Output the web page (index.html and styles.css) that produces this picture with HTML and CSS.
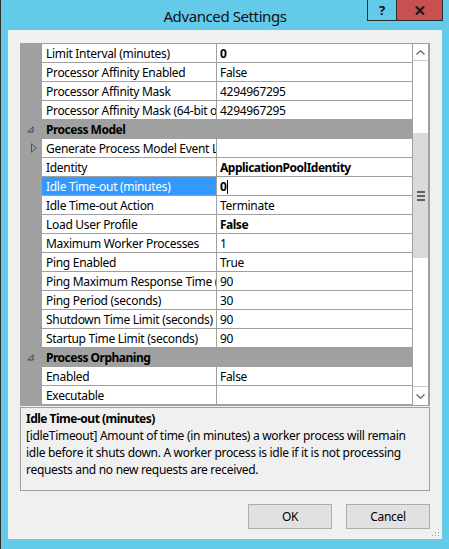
FILE: index.html
```html
<!DOCTYPE html>
<html>
<head>
<meta charset="utf-8">
<link rel="stylesheet" href="styles.css">
</head>
<body>
<div class="window">
  <div class="titlebar">
    <div class="title">Advanced Settings</div>
    <div class="caption-btns">
      <div class="cbtn help">?</div>
      <div class="cbtn close">
        <svg width="10" height="9" viewBox="0 0 10 9"><path d="M1 0.5 L9 8.5 M9 0.5 L1 8.5" stroke="#1a1a1a" stroke-width="2.2" fill="none"/></svg>
      </div>
    </div>
  </div>
  <div class="client">
    <div class="pg">
      <div class="rows">
        <div class="row"><div class="gut"></div><div class="name">Limit Interval (minutes)</div><div class="val bold">0</div></div>
        <div class="row"><div class="gut"></div><div class="name">Processor Affinity Enabled</div><div class="val">False</div></div>
        <div class="row"><div class="gut"></div><div class="name">Processor Affinity Mask</div><div class="val">4294967295</div></div>
        <div class="row"><div class="gut"></div><div class="name">Processor Affinity Mask (64-bit option)</div><div class="val">4294967295</div></div>
        <div class="row cat"><div class="gut"><svg class="collapse" width="7" height="7" viewBox="0 0 7 7"><path d="M6 0.8 L6 6 L0.8 6 Z" fill="none" stroke="#404040" stroke-width="1"/></svg></div><div class="catname">Process Model</div></div>
        <div class="row"><div class="gut"><svg class="expand" width="6" height="10" viewBox="0 0 6 10"><path d="M0.5 0.8 L5.2 5 L0.5 9.2 Z" fill="none" stroke="#505050" stroke-width="1"/></svg></div><div class="name">Generate Process Model Event Log Entry</div><div class="val"></div></div>
        <div class="row"><div class="gut"></div><div class="name">Identity</div><div class="val bold">ApplicationPoolIdentity</div></div>
        <div class="row"><div class="gut"></div><div class="name sel">Idle Time-out (minutes)</div><div class="val bold">0<span class="caret"></span></div></div>
        <div class="row"><div class="gut"></div><div class="name">Idle Time-out Action</div><div class="val">Terminate</div></div>
        <div class="row"><div class="gut"></div><div class="name">Load User Profile</div><div class="val bold">False</div></div>
        <div class="row"><div class="gut"></div><div class="name">Maximum Worker Processes</div><div class="val">1</div></div>
        <div class="row"><div class="gut"></div><div class="name">Ping Enabled</div><div class="val">True</div></div>
        <div class="row"><div class="gut"></div><div class="name">Ping Maximum Response Time (seconds)</div><div class="val">90</div></div>
        <div class="row"><div class="gut"></div><div class="name">Ping Period (seconds)</div><div class="val">30</div></div>
        <div class="row"><div class="gut"></div><div class="name">Shutdown Time Limit (seconds)</div><div class="val">90</div></div>
        <div class="row"><div class="gut"></div><div class="name">Startup Time Limit (seconds)</div><div class="val">90</div></div>
        <div class="row cat"><div class="gut"><svg class="collapse" width="7" height="7" viewBox="0 0 7 7"><path d="M6 0.8 L6 6 L0.8 6 Z" fill="none" stroke="#404040" stroke-width="1"/></svg></div><div class="catname">Process Orphaning</div></div>
        <div class="row"><div class="gut"></div><div class="name">Enabled</div><div class="val">False</div></div>
        <div class="row"><div class="gut"></div><div class="name">Executable</div><div class="val"></div></div>
      </div>
      <div class="sb">
        <div class="sb-btn up"><svg width="9" height="5" viewBox="0 0 9 5"><path d="M0.5 4.5 L4.5 0.8 L8.5 4.5" fill="none" stroke="#606060" stroke-width="1.2"/></svg></div>
        <div class="sb-track">
          <div class="thumb">
            <div class="grip"><span></span><span></span><span></span></div>
          </div>
        </div>
        <div class="sb-btn down"><svg width="9" height="5" viewBox="0 0 9 5"><path d="M0.5 0.5 L4.5 4.2 L8.5 0.5" fill="none" stroke="#606060" stroke-width="1.2"/></svg></div>
      </div>
    </div>
    <div class="desc">
      <div class="desc-title">Idle Time-out (minutes)</div>
      <div class="desc-text">[idleTimeout] Amount of time (in minutes) a worker process will remain<br>idle before it shuts down. A worker process is idle if it is not processing<br>requests and no new requests are received.</div>
    </div>
    <div class="buttons">
      <div class="btn">OK</div>
      <div class="btn">Cancel</div>
    </div>
    <svg class="grip-corner" width="8" height="8" viewBox="0 0 8 8">
      <rect x="6" y="0" width="1" height="1" fill="#a0a0a0"/>
      <rect x="3" y="3" width="1" height="1" fill="#a0a0a0"/>
      <rect x="6" y="3" width="1" height="1" fill="#a0a0a0"/>
      <rect x="0" y="6" width="1" height="1" fill="#a0a0a0"/>
      <rect x="3" y="6" width="1" height="1" fill="#a0a0a0"/>
      <rect x="6" y="6" width="1" height="1" fill="#a0a0a0"/>
    </svg>
  </div>
</div>
</body>
</html>
```
FILE: styles.css
```css
* { box-sizing: border-box; }
html, body { margin: 0; padding: 0; }
body {
  width: 449px;
  height: 549px;
  overflow: hidden;
  font-family: "Noto Sans", "Open Sans", sans-serif;
  font-size: 12px;
  letter-spacing: -0.3px;
  color: #000;
}
.window {
  width: 449px;
  height: 549px;
  background: #64caea;
  border-left: 1px solid #2d2d2d;
  padding: 0 7px 10px 7px;
  display: flex;
  flex-direction: column;
}
.titlebar {
  height: 30px;
  flex: none;
  position: relative;
  display: flex;
  align-items: center;
  justify-content: center;
}
.title {
  font-size: 15px;
  letter-spacing: -0.4px;
  color: #111;
  line-height: 20px;
  padding-top: 1px;
}
.caption-btns {
  position: absolute;
  top: 0;
  right: -1px;
  display: flex;
}
.cbtn {
  height: 21px;
  border: 1px solid #2d2d2d;
  border-top: none;
  display: flex;
  align-items: center;
  justify-content: center;
}
.help {
  width: 29px;
  border-right: none;
  font-weight: bold;
  font-size: 13px;
  color: #111;
}
.close {
  width: 47px;
  background: #c75050;
}
.client {
  flex: 1;
  background: #f0f0f0;
  padding: 13px 12px 0 12px;
  position: relative;
  display: flex;
  flex-direction: column;
}
.pg {
  display: flex;
  width: 410px;
  border: 1px solid #a0a0a0;
  border-right-width: 2px;
  background: #fff;
}
.rows { width: 392px; }
.row {
  display: flex;
  height: 19px;
}
.gut {
  width: 21px;
  flex: none;
  background: #a0a0a0;
  position: relative;
}
.name, .val {
  height: 19px;
  line-height: 17px;
  padding-top: 1px;
  border-bottom: 1px solid #a0a0a0;
  border-right: 1px solid #a0a0a0;
  white-space: nowrap;
  overflow: hidden;
  background: #fff;
}
.name {
  width: 175px;
  flex: none;
  padding-left: 4px;
  color: #000;
}
.name.sel {
  background: #3399ff;
  color: #fff;
}
.val {
  width: 196px;
  flex: none;
  padding-left: 3px;
}
.bold { font-weight: bold; letter-spacing: -0.5px; }
.caret {
  display: inline-block;
  width: 1px;
  height: 14px;
  background: #000;
  vertical-align: -3px;
  margin-left: 1px;
}
.cat { background: #a0a0a0; }
.catname {
  flex: 1;
  padding-left: 4px;
  padding-top: 1px;
  line-height: 17px;
  font-weight: bold;
  letter-spacing: -0.5px;
  color: #000;
}
.collapse { position: absolute; left: 6px; top: 6px; }
.expand { position: absolute; left: 10px; top: 4px; }
.sb {
  width: 15px;
  display: flex;
  flex-direction: column;
  background: #fff;
}
.sb-btn {
  height: 17px;
  display: flex;
  align-items: center;
  justify-content: center;
  flex: none;
}
.sb-btn.up { border-bottom: 1px solid #c8c8c8; }
.sb-btn.down { border-top: 1px solid #c8c8c8; height: 19px; }
.sb-track {
  flex: 1;
  padding-top: 72px;
}
.thumb {
  height: 125px;
  background: #dadada;
  display: flex;
  align-items: center;
  justify-content: center;
}
.grip {
  display: flex;
  flex-direction: column;
  gap: 2px;
}
.grip span {
  display: block;
  width: 8px;
  height: 2px;
  background: #606060;
}
.desc {
  margin-top: 1px;
  width: 410px;
  height: 84px;
  border: 1px solid #a0a0a0;
  padding: 2px 5px;
  line-height: 17px;
  color: #000;
}
.desc-title { font-weight: bold; letter-spacing: -0.5px; }
.desc-text { white-space: nowrap; }
.buttons {
  display: flex;
  justify-content: flex-end;
  gap: 14px;
  margin-top: 13px;
  width: 410px;
}
.btn {
  width: 84px;
  height: 25px;
  background: #e1e1e1;
  border: 1px solid #adadad;
  display: flex;
  align-items: center;
  justify-content: center;
  color: #000;
}
.grip-corner {
  position: absolute;
  right: 2px;
  bottom: 2px;
}
```
